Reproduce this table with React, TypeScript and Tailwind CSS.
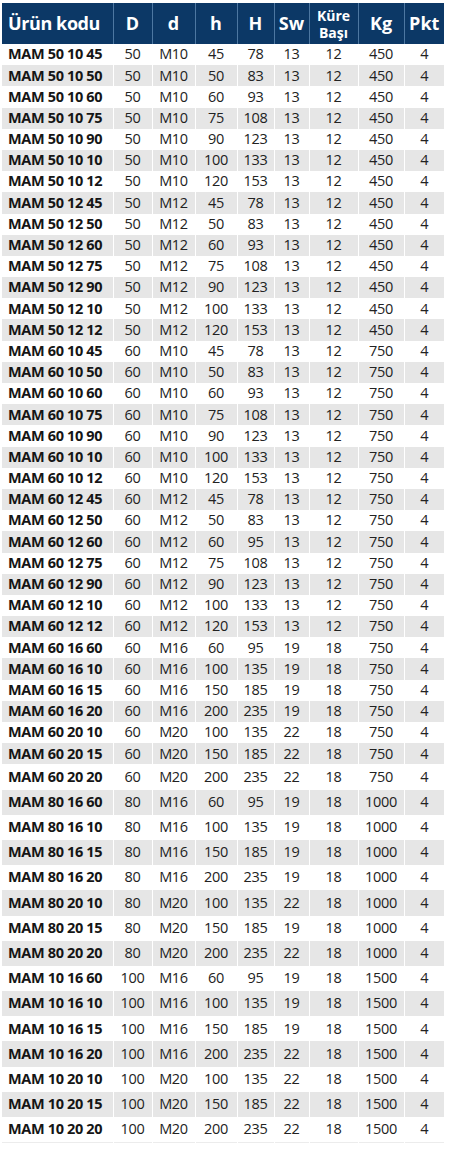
import React from "react";

type Row = [string, string, string, string, string, string, string, string, string];

const ROWS: Row[] = [
  ["MAM 50 10 45", "50", "M10", "45", "78", "13", "12", "450", "4"],
  ["MAM 50 10 50", "50", "M10", "50", "83", "13", "12", "450", "4"],
  ["MAM 50 10 60", "50", "M10", "60", "93", "13", "12", "450", "4"],
  ["MAM 50 10 75", "50", "M10", "75", "108", "13", "12", "450", "4"],
  ["MAM 50 10 90", "50", "M10", "90", "123", "13", "12", "450", "4"],
  ["MAM 50 10 10", "50", "M10", "100", "133", "13", "12", "450", "4"],
  ["MAM 50 10 12", "50", "M10", "120", "153", "13", "12", "450", "4"],
  ["MAM 50 12 45", "50", "M12", "45", "78", "13", "12", "450", "4"],
  ["MAM 50 12 50", "50", "M12", "50", "83", "13", "12", "450", "4"],
  ["MAM 50 12 60", "50", "M12", "60", "93", "13", "12", "450", "4"],
  ["MAM 50 12 75", "50", "M12", "75", "108", "13", "12", "450", "4"],
  ["MAM 50 12 90", "50", "M12", "90", "123", "13", "12", "450", "4"],
  ["MAM 50 12 10", "50", "M12", "100", "133", "13", "12", "450", "4"],
  ["MAM 50 12 12", "50", "M12", "120", "153", "13", "12", "450", "4"],
  ["MAM 60 10 45", "60", "M10", "45", "78", "13", "12", "750", "4"],
  ["MAM 60 10 50", "60", "M10", "50", "83", "13", "12", "750", "4"],
  ["MAM 60 10 60", "60", "M10", "60", "93", "13", "12", "750", "4"],
  ["MAM 60 10 75", "60", "M10", "75", "108", "13", "12", "750", "4"],
  ["MAM 60 10 90", "60", "M10", "90", "123", "13", "12", "750", "4"],
  ["MAM 60 10 10", "60", "M10", "100", "133", "13", "12", "750", "4"],
  ["MAM 60 10 12", "60", "M10", "120", "153", "13", "12", "750", "4"],
  ["MAM 60 12 45", "60", "M12", "45", "78", "13", "12", "750", "4"],
  ["MAM 60 12 50", "60", "M12", "50", "83", "13", "12", "750", "4"],
  ["MAM 60 12 60", "60", "M12", "60", "95", "13", "12", "750", "4"],
  ["MAM 60 12 75", "60", "M12", "75", "108", "13", "12", "750", "4"],
  ["MAM 60 12 90", "60", "M12", "90", "123", "13", "12", "750", "4"],
  ["MAM 60 12 10", "60", "M12", "100", "133", "13", "12", "750", "4"],
  ["MAM 60 12 12", "60", "M12", "120", "153", "13", "12", "750", "4"],
  ["MAM 60 16 60", "60", "M16", "60", "95", "19", "18", "750", "4"],
  ["MAM 60 16 10", "60", "M16", "100", "135", "19", "18", "750", "4"],
  ["MAM 60 16 15", "60", "M16", "150", "185", "19", "18", "750", "4"],
  ["MAM 60 16 20", "60", "M16", "200", "235", "19", "18", "750", "4"],
  ["MAM 60 20 10", "60", "M20", "100", "135", "22", "18", "750", "4"],
  ["MAM 60 20 15", "60", "M20", "150", "185", "22", "18", "750", "4"],
  ["MAM 60 20 20", "60", "M20", "200", "235", "22", "18", "750", "4"],
  ["MAM 80 16 60", "80", "M16", "60", "95", "19", "18", "1000", "4"],
  ["MAM 80 16 10", "80", "M16", "100", "135", "19", "18", "1000", "4"],
  ["MAM 80 16 15", "80", "M16", "150", "185", "19", "18", "1000", "4"],
  ["MAM 80 16 20", "80", "M16", "200", "235", "19", "18", "1000", "4"],
  ["MAM 80 20 10", "80", "M20", "100", "135", "22", "18", "1000", "4"],
  ["MAM 80 20 15", "80", "M20", "150", "185", "19", "18", "1000", "4"],
  ["MAM 80 20 20", "80", "M20", "200", "235", "22", "18", "1000", "4"],
  ["MAM 10 16 60", "100", "M16", "60", "95", "19", "18", "1500", "4"],
  ["MAM 10 16 10", "100", "M16", "100", "135", "19", "18", "1500", "4"],
  ["MAM 10 16 15", "100", "M16", "150", "185", "19", "18", "1500", "4"],
  ["MAM 10 16 20", "100", "M16", "200", "235", "22", "18", "1500", "4"],
  ["MAM 10 20 10", "100", "M20", "100", "135", "22", "18", "1500", "4"],
  ["MAM 10 20 15", "100", "M20", "150", "185", "22", "18", "1500", "4"],
  ["MAM 10 20 20", "100", "M20", "200", "235", "22", "18", "1500", "4"],
];

const WIDTHS = ["w-[111px]", "w-[39px]", "w-[43px]", "w-[42px]", "w-[37px]", "w-[35px]", "w-[49px]", "w-[46px]", "w-[40px]"];

const HEADS = ["D", "d", "h", "H", "Sw"];

export default function App() {
  return (
    <div className="h-[1150px] w-[450px] bg-white pl-[2px] pt-[3px] font-['Open_Sans',sans-serif]">
      <table className="w-[442px] table-fixed border-collapse">
        <colgroup>
          {WIDTHS.map((w, i) => (
            <col key={i} className={w} />
          ))}
        </colgroup>
        <thead>
          <tr className="h-[41px] bg-[#0c3866] text-white">
            <th className="pl-[6px] text-left text-[18px] font-bold tracking-[-0.4px]">Ürün kodu</th>
            {HEADS.map((h) => (
              <th key={h} className="border-l border-[#4d77a1] text-center text-[18px] font-bold">
                {h}
              </th>
            ))}
            <th className="border-l border-[#4d77a1] p-0 text-center text-[14px] font-bold">
              <span className="block leading-[17px]">Küre</span>
              <span className="block leading-[17px]">Başı</span>
            </th>
            <th className="border-l border-[#4d77a1] text-center text-[18px] font-bold">Kg</th>
            <th className="border-l border-[#4d77a1] text-center text-[18px] font-bold">Pkt</th>
          </tr>
        </thead>
        <tbody>
          {ROWS.map((r, i) => (
            <tr
              key={r[0]}
              className={`${i < 34 ? "h-[21.2px]" : "h-[25.2px]"} ${i % 2 === 1 ? "bg-[#e6e6e6]" : "bg-white"} ${
                i === ROWS.length - 1 ? "border-b border-[#ececec]" : ""
              }`}
            >
              <td className="whitespace-nowrap p-0 pl-[6px] text-[14.5px] font-bold leading-none tracking-[-0.35px] text-[#151515]">
                {r[0]}
              </td>
              {r.slice(1).map((c, j) => (
                <td
                  key={j}
                  className="border-l border-white p-0 text-center text-[14.5px] leading-none tracking-[-0.3px] text-[#222]"
                >
                  {c}
                </td>
              ))}
            </tr>
          ))}
        </tbody>
      </table>
    </div>
  );
}
